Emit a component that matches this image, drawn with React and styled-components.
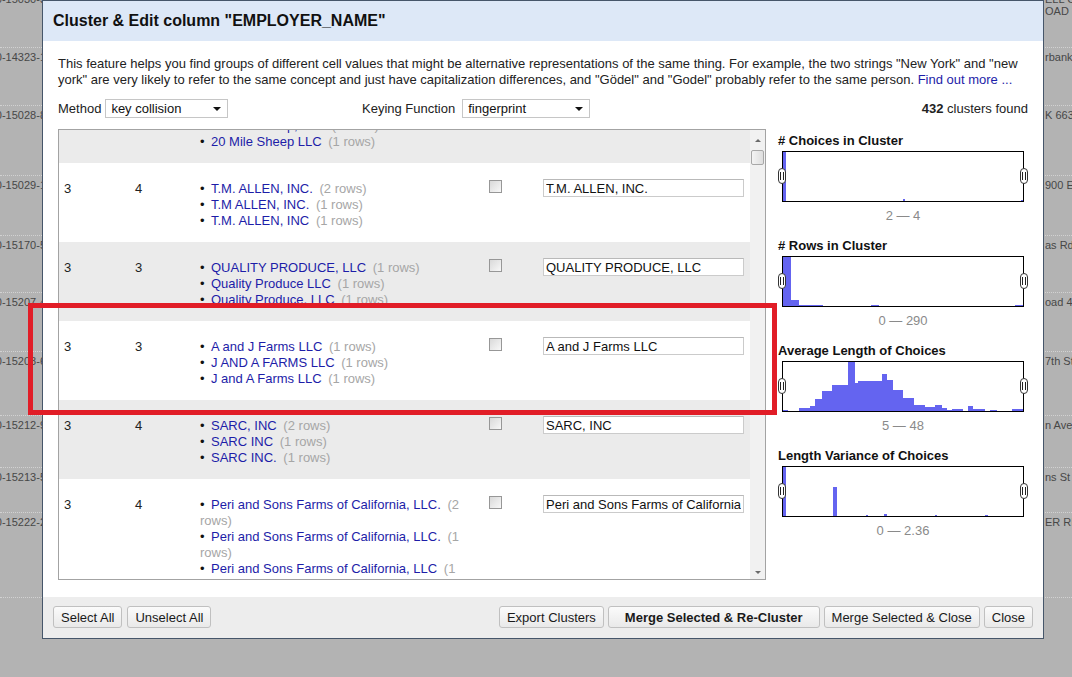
import React, { useLayoutEffect, useRef } from "react";
import styled, { createGlobalStyle } from "styled-components";

const GlobalStyle = createGlobalStyle`
  html, body {
    margin: 0;
    padding: 0;
    overflow: hidden;
  }
  body {
    font-family: "Liberation Sans", Arial, sans-serif;
  }
`;

const Page = styled.div`
  position: relative;
  width: 1072px;
  height: 677px;
  overflow: hidden;
  background: #b3b3b3;
`;

/* ---- grid behind the dialog ---- */
const BgRows = styled.div`
  display: flex;
  flex-direction: column;
  margin-top: -10px;
`;
const BgRow = styled.div`
  height: ${(p) => p.$h}px;
  flex-shrink: 0;
  box-sizing: border-box;
  display: flex;
  justify-content: space-between;
  padding-top: 3px;
  border-bottom: 1px dotted #d2d2d2;
  font-size: 11px;
  line-height: 12px;
  color: #474747;
`;
const BgLeft = styled.div`
  width: 46px;
  display: flex;
  justify-content: flex-end;
  overflow: hidden;
  white-space: nowrap;
`;
const BgRight = styled.div`
  width: 27px;
  overflow: hidden;
  white-space: nowrap;
`;

/* ---- dialog ---- */
const Dialog = styled.div`
  position: absolute;
  left: 42px;
  top: 0;
  width: 1002px;
  height: 639px;
  box-sizing: border-box;
  border: 1px solid #46566a;
  background: #fff;
  display: flex;
  flex-direction: column;
`;
const Header = styled.div`
  height: 40px;
  flex-shrink: 0;
  display: flex;
  align-items: center;
  padding-left: 10px;
  background: #dde8f7;
  font-size: 16px;
  font-weight: bold;
  color: #111;
`;
const Body = styled.div`
  flex: 1;
  padding: 15px 15px 0;
  display: flex;
  flex-direction: column;
`;
const Intro = styled.p`
  margin: 0;
  font-size: 13px;
  line-height: 16px;
  color: #222;
`;
const TextLink = styled.a`
  color: #1d1da8;
  text-decoration: none;
`;
const Controls = styled.div`
  margin-top: 11px;
  height: 19px;
  display: flex;
  align-items: center;
  font-size: 13px;
  color: #222;
`;
const Field = styled.div`
  display: flex;
  align-items: center;
  gap: ${(p) => p.$gap}px;
  width: ${(p) => (p.$w ? `${p.$w}px` : "auto")};
`;
const SelectBox = styled.div`
  width: ${(p) => p.$w}px;
  height: 19px;
  box-sizing: border-box;
  border: 1px solid #c6c6c6;
  background: #fff;
  display: flex;
  align-items: center;
  padding: 0 6px 0 5px;
  font-size: 13px;
  color: #111;
  &::after {
    content: "";
    margin-left: auto;
    border-left: 4px solid transparent;
    border-right: 4px solid transparent;
    border-top: 4px solid #111;
  }
`;
const Found = styled.div`
  margin-left: auto;
  b {
    font-weight: bold;
  }
`;

const Main = styled.div`
  margin-top: 11px;
  height: 451px;
  display: flex;
  gap: 12px;
`;
const TableBox = styled.div`
  width: 708px;
  height: 451px;
  box-sizing: border-box;
  border: 1px solid #a3a3a3;
  display: flex;
`;
const Viewport = styled.div`
  flex: 1;
  overflow: hidden;
`;
const Row = styled.div`
  display: grid;
  grid-template-columns: 70px 65px 282px 59px 215px;
  background: ${(p) => (p.$alt ? "#ebebeb" : "#fff")};
  font-size: 13px;
  line-height: 16px;
  color: #222;
`;
const Cell = styled.div`
  padding: 18px 0 13px ${(p) => p.$pl}px;
`;
const Choices = styled.ul`
  margin: 0;
  padding: 0 6px 0 0;
  list-style: none;
`;
const Choice = styled.li`
  &::before {
    content: "•";
    display: inline-block;
    width: 11px;
    color: #111;
  }
`;
const ChoiceLink = styled.a`
  color: #1d1da8;
  text-decoration: none;
`;
const Count = styled.span`
  margin-left: 3px;
  color: #a6a6a6;
`;
const Check = styled.input`
  appearance: none;
  display: block;
  margin: -1px 0 0;
  width: 13px;
  height: 13px;
  box-sizing: border-box;
  border: 1px solid #979797;
  background: linear-gradient(135deg, #d9d9d9, #f8f8f8);
`;
const ValueInput = styled.input`
  display: block;
  margin: -2px 0 0;
  width: 201px;
  height: 18px;
  box-sizing: border-box;
  border: 1px solid #cbcbcb;
  border-top-color: #b9b9b9;
  padding: 0 2px;
  font-family: "Liberation Sans", Arial, sans-serif;
  font-size: 13px;
  color: #111;
  background: #fff;
  outline: none;
`;

const ScrollTrack = styled.div`
  width: 15px;
  background: #f1f1f1;
  display: flex;
  flex-direction: column;
  align-items: center;
`;
const ScrollArrow = styled.div`
  height: ${(p) => p.$h}px;
  display: flex;
  align-items: ${(p) => (p.$down ? "flex-start" : "center")};
  justify-content: center;
  &::after {
    content: "";
    border-left: 3px solid transparent;
    border-right: 3px solid transparent;
    ${(p) =>
      p.$down ? "border-top: 3px solid #6a6a6a;" : "border-bottom: 3px solid #6a6a6a;"}
  }
`;
const Thumb = styled.div`
  width: 13px;
  height: 15px;
  box-sizing: border-box;
  border: 1px solid #a8a8a8;
  border-radius: 2px;
  background: linear-gradient(to right, #f4f4f4, #dedede);
`;
const Spacer = styled.div`
  flex: 1;
`;

/* ---- histograms ---- */
const Panel = styled.div`
  width: 250px;
  padding-top: 4px;
  display: flex;
  flex-direction: column;
`;
const HistBlock = styled.div`
  margin-bottom: 14px;
`;
const HistTitle = styled.div`
  font-size: 13px;
  font-weight: bold;
  line-height: 16px;
  color: #111;
  white-space: nowrap;
`;
const HistBox = styled.div`
  position: relative;
  margin: 2px 0 0 4px;
  width: 242px;
  height: 51px;
  box-sizing: border-box;
  border: 1px solid #000;
  svg {
    display: block;
  }
`;
const Handle = styled.span`
  position: absolute;
  top: 16px;
  ${(p) => (p.$right ? "right: -5px;" : "left: -5px;")}
  width: 8px;
  height: 16px;
  box-sizing: border-box;
  border: 1px solid #333;
  border-radius: 4px;
  background: #fff;
  &::before,
  &::after {
    content: "";
    position: absolute;
    top: 3px;
    width: 1px;
    height: 8px;
    background: #222;
  }
  &::before {
    left: 1px;
  }
  &::after {
    left: 4px;
  }
`;
const Range = styled.div`
  margin: 6px 0 0 4px;
  width: 242px;
  text-align: center;
  font-size: 13px;
  line-height: 16px;
  color: #8a8a8a;
`;

/* ---- footer ---- */
const Footer = styled.div`
  height: 41px;
  flex-shrink: 0;
  box-sizing: border-box;
  padding: 9px 10px 0;
  background: #ededed;
  display: flex;
  align-items: flex-start;
`;
const ButtonGroup = styled.div`
  display: flex;
  gap: ${(p) => p.$gap}px;
`;
const Button = styled.button`
  height: 22px;
  padding: 0 ${(p) => (p.$primary ? 16 : 7)}px;
  border: 1px solid #c0c0c0;
  border-radius: 3px;
  background: linear-gradient(#fbfbfb, #e9e9e9);
  font-family: "Liberation Sans", Arial, sans-serif;
  font-size: 13px;
  font-weight: ${(p) => (p.$primary ? "bold" : "normal")};
  color: #1a1a1a;
`;

const Callout = styled.div`
  position: absolute;
  left: 28px;
  top: 303px;
  width: 749px;
  height: 112px;
  box-sizing: border-box;
  border: 5px solid #e11d27;
  pointer-events: none;
`;

/* ---- data ---- */
const bgRows = [
  { h: 58, left: "0-15030-3", right: ["ELL C", "OAD"] },
  { h: 58, left: "0-14323-1", right: ["rbank"] },
  { h: 70, left: "0-15028-8", right: ["K 6631"] },
  { h: 60, left: "0-15029-1", right: ["900 E"] },
  { h: 57, left: "0-15170-5", right: ["as Rd"] },
  { h: 59, left: "0-15207-4", right: ["oad 43"] },
  { h: 64, left: "0-15208-6", right: ["7th St"] },
  { h: 52, left: "0-15212-9", right: ["n Ave"] },
  { h: 45, left: "0-15213-5", right: ["ns St"] },
  { h: 85, left: "0-15222-2", right: ["ER RI"] },
  { h: 90, left: "", right: [] },
];

const clusters = [
  {
    size: 3,
    rows: 4,
    value: "20 MILE SHEEP LLC",
    choices: [
      ["20 MILE SHEEP LLC", 2],
      ["20 Mile Sheep, LLC", 1],
      ["20 Mile Sheep LLC", 1],
    ],
  },
  {
    size: 3,
    rows: 4,
    value: "T.M. ALLEN, INC.",
    choices: [
      ["T.M. ALLEN, INC.", 2],
      ["T.M ALLEN, INC.", 1],
      ["T.M. ALLEN, INC", 1],
    ],
  },
  {
    size: 3,
    rows: 3,
    value: "QUALITY PRODUCE, LLC",
    choices: [
      ["QUALITY PRODUCE, LLC", 1],
      ["Quality Produce LLC", 1],
      ["Quality Produce, LLC", 1],
    ],
  },
  {
    size: 3,
    rows: 3,
    value: "A and J Farms LLC",
    choices: [
      ["A and J Farms LLC", 1],
      ["J AND A FARMS LLC", 1],
      ["J and A Farms LLC", 1],
    ],
  },
  {
    size: 3,
    rows: 4,
    value: "SARC, INC",
    choices: [
      ["SARC, INC", 2],
      ["SARC INC", 1],
      ["SARC INC.", 1],
    ],
  },
  {
    size: 3,
    rows: 4,
    value: "Peri and Sons Farms of California, LLC.",
    choices: [
      ["Peri and Sons Farms of California, LLC.", 2],
      ["Peri and Sons Farms of California, LLC.", 1],
      ["Peri and Sons Farms of California, LLC", 1],
    ],
  },
];

// [x, width, height] inside a 240x49 plot
const histograms = [
  {
    title: "# Choices in Cluster",
    range: "2 — 4",
    bars: [
      [0, 3, 49],
      [120, 2, 2],
      [238, 2, 1],
    ],
  },
  {
    title: "# Rows in Cluster",
    range: "0 — 290",
    bars: [
      [0, 8, 49],
      [8, 8, 6],
      [16, 24, 1],
      [88, 8, 1],
      [232, 8, 1],
    ],
  },
  {
    title: "Average Length of Choices",
    range: "5 — 48",
    bars: [
      [0, 5, 1], [16, 11, 3], [27, 5, 5], [32, 7, 12], [39, 10, 20],
      [49, 6, 26], [55, 10, 26], [65, 7, 49], [72, 3, 28], [75, 7, 30],
      [82, 17, 30], [99, 5, 37], [104, 6, 31], [110, 10, 21], [120, 11, 13],
      [131, 11, 6], [142, 10, 4], [152, 7, 6], [159, 5, 3], [164, 5, 1],
      [169, 11, 2], [185, 5, 5], [190, 5, 2], [195, 7, 2], [207, 7, 1],
      [229, 11, 2],
    ],
  },
  {
    title: "Length Variance of Choices",
    range: "0 — 2.36",
    bars: [
      [0, 3, 49],
      [50, 4, 29],
      [83, 2, 1],
      [101, 3, 2],
      [152, 2, 1],
      [202, 3, 1],
    ],
  },
];

function Histogram({ title, range, bars }) {
  return (
    <HistBlock>
      <HistTitle>{title}</HistTitle>
      <HistBox>
        <svg width="240" height="49" viewBox="0 0 240 49">
          {bars.map(([x, w, h], i) => (
            <rect key={i} x={x} y={49 - h} width={w} height={h} fill="#6464f0" />
          ))}
        </svg>
        <Handle />
        <Handle $right />
      </HistBox>
      <Range>{range}</Range>
    </HistBlock>
  );
}

function ClusterRow({ cluster, alt }) {
  return (
    <Row $alt={alt}>
      <Cell $pl={5}>{cluster.size}</Cell>
      <Cell $pl={6}>{cluster.rows}</Cell>
      <Cell $pl={6}>
        <Choices>
          {cluster.choices.map(([name, n], i) => (
            <Choice key={i}>
              <ChoiceLink href="#">{name}</ChoiceLink> <Count>({n} rows)</Count>
            </Choice>
          ))}
        </Choices>
      </Cell>
      <Cell $pl={13}>
        <Check type="checkbox" />
      </Cell>
      <Cell $pl={8}>
        <ValueInput defaultValue={cluster.value} />
      </Cell>
    </Row>
  );
}

export default function App() {
  const viewRef = useRef(null);

  useLayoutEffect(() => {
    if (viewRef.current) viewRef.current.scrollTop = 46;
  }, []);

  return (
    <Page>
      <GlobalStyle />
      <BgRows>
        {bgRows.map((r, i) => (
          <BgRow key={i} $h={r.h}>
            <BgLeft>{r.left}</BgLeft>
            <BgRight>
              {r.right.map((t, j) => (
                <div key={j}>{t}</div>
              ))}
            </BgRight>
          </BgRow>
        ))}
      </BgRows>

      <Dialog>
        <Header>Cluster &amp; Edit column "EMPLOYER_NAME"</Header>
        <Body>
          <Intro>
            This feature helps you find groups of different cell values that might be
            alternative representations of the same thing. For example, the two strings
            "New York" and "new york" are very likely to refer to the same concept and
            just have capitalization differences, and "Gödel" and "Godel" probably refer
            to the same person. <TextLink href="#">Find out more ...</TextLink>
          </Intro>
          <Controls>
            <Field $gap={4} $w={304}>
              Method
              <SelectBox $w={123}>key collision</SelectBox>
            </Field>
            <Field $gap={7}>
              Keying Function
              <SelectBox $w={128}>fingerprint</SelectBox>
            </Field>
            <Found>
              <b>432</b> clusters found
            </Found>
          </Controls>
          <Main>
            <TableBox>
              <Viewport ref={viewRef}>
                {clusters.map((c, i) => (
                  <ClusterRow key={i} cluster={c} alt={i % 2 === 0} />
                ))}
              </Viewport>
              <ScrollTrack>
                <ScrollArrow $h={20} />
                <Thumb />
                <Spacer />
                <ScrollArrow $down $h={8} />
              </ScrollTrack>
            </TableBox>
            <Panel>
              {histograms.map((h) => (
                <Histogram key={h.title} {...h} />
              ))}
            </Panel>
          </Main>
        </Body>
        <Footer>
          <ButtonGroup $gap={5}>
            <Button>Select All</Button>
            <Button>Unselect All</Button>
          </ButtonGroup>
          <Spacer />
          <ButtonGroup $gap={4}>
            <Button>Export Clusters</Button>
            <Button $primary>Merge Selected &amp; Re-Cluster</Button>
            <Button>Merge Selected &amp; Close</Button>
            <Button>Close</Button>
          </ButtonGroup>
        </Footer>
      </Dialog>

      <Callout />
    </Page>
  );
}
